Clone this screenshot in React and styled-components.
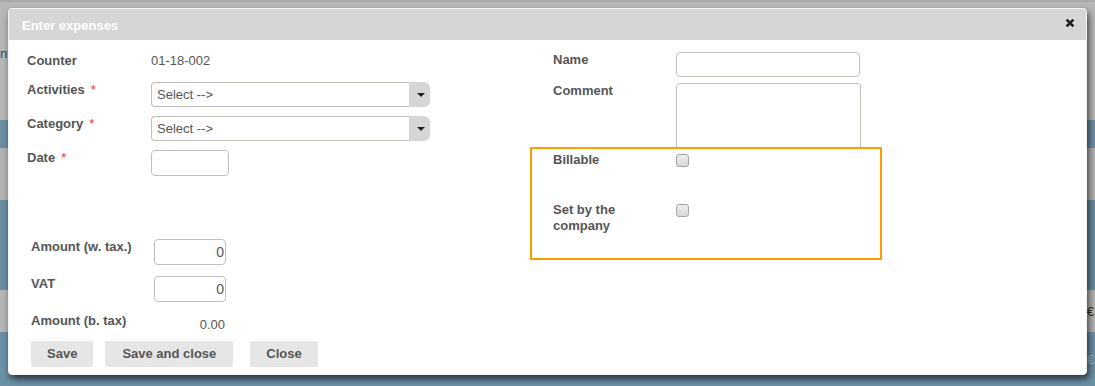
import React from "react";
import styled, { createGlobalStyle } from "styled-components";

const Global = createGlobalStyle`
  html, body { margin: 0; padding: 0; }
  body { font-family: "Liberation Sans", Arial, sans-serif; font-size: 13px; color: #555; }
  * { box-sizing: border-box; }
`;

const Page = styled.div`
  position: relative;
  width: 1095px;
  height: 386px;
  overflow: hidden;
`;

const Backdrop = styled.div`
  display: flex;
  flex-direction: column;
  height: 100%;
`;

const Band = styled.div`
  height: ${(p) => p.$h}px;
  background: ${(p) => p.$bg};
  display: flex;
  justify-content: space-between;
  align-items: ${(p) => p.$align || "center"};
  color: ${(p) => p.$fg || "#444"};
  font-size: 13px;
  flex-shrink: 0;
  border-top: ${(p) => (p.$line ? "2px solid #a9a9a9" : "none")};
`;

const BandText = styled.span`
  padding-top: ${(p) => p.$pt || 0}px;
  margin-left: ${(p) => p.$ml || 0}px;
  margin-right: ${(p) => p.$mr || 0}px;
`;

const Modal = styled.div`
  position: absolute;
  left: 8px;
  top: 8px;
  width: 1079px;
  height: 367px;
  background: #fff;
  border: 1px solid #f4f4f4;
  border-radius: 4px;
  box-shadow: 2px 4px 7px rgba(0, 0, 0, 0.65);
  overflow: hidden;
`;

const Header = styled.div`
  height: 31px;
  background: #d6d6d6;
  display: flex;
  align-items: center;
  justify-content: space-between;
  padding: 1px 11px 0 13px;
`;

const Title = styled.div`
  color: #fff;
  font-weight: bold;
  font-size: 13px;
`;

const CloseX = styled.svg`
  width: 10px;
  height: 10px;
  margin-top: -4px;
`;

const Body = styled.div`
  display: grid;
  grid-template-columns: 503px 352px;
  padding: 8px 0 0 18px;
`;

const Column = styled.div`
  display: flex;
  flex-direction: column;
  gap: ${(p) => p.$gap || 0}px;
`;

const Row = styled.div`
  display: grid;
  grid-template-columns: ${(p) => p.$label || 124}px auto;
  align-items: start;
  margin-top: ${(p) => p.$mt || 0}px;
`;

const Label = styled.div`
  font-weight: bold;
  color: #555;
  line-height: ${(p) => p.$lh || 15}px;
  max-width: ${(p) => p.$max || 200}px;
`;

const Req = styled.span`
  color: #e33;
  margin-left: 6px;
  font-weight: normal;
`;

const Value = styled.div`
  line-height: ${(p) => p.$lh || 15}px;
  padding-top: ${(p) => p.$pt || 0}px;
  text-align: ${(p) => p.$align || "left"};
  width: ${(p) => (p.$w ? p.$w + "px" : "auto")};
  padding-right: ${(p) => p.$pr || 0}px;
  color: #555;
`;

const SelectBox = styled.div`
  display: flex;
  width: 279px;
  height: 25px;
`;

const SelectText = styled.div`
  flex: 1;
  border: 1px solid #c2bdb6;
  border-right: none;
  border-radius: 4px 0 0 4px;
  padding-left: 5px;
  line-height: 23px;
  color: #555;
`;

const SelectArrow = styled.div`
  width: 21px;
  background: #d6d6d6;
  border-radius: 0 6px 6px 0;
  display: flex;
  align-items: center;
  justify-content: center;
  padding-left: 3px;
`;

const Tri = styled.div`
  width: 0;
  height: 0;
  border-left: 4px solid transparent;
  border-right: 4px solid transparent;
  border-top: 4px solid #222;
`;

const TextInput = styled.div`
  width: ${(p) => p.$w}px;
  height: ${(p) => p.$h || 26}px;
  border: 1px solid #c2bdb6;
  border-radius: 4px;
  text-align: right;
  line-height: ${(p) => (p.$h || 26) - 2}px;
  padding-right: 1px;
  font-size: 14px;
  color: #555;
`;

const Clip = styled.div`
  height: ${(p) => p.$h}px;
  overflow: hidden;
`;

const AmountBlock = styled.div`
  display: flex;
  flex-direction: column;
  padding-left: 4px;
  margin-top: 63px;
`;

const Buttons = styled.div`
  display: flex;
  margin-top: 9px;
`;

const Btn = styled.div`
  height: 26px;
  padding: 0 ${(p) => p.$px || 16}px;
  background: #e6e6e6;
  border-radius: 2px;
  font-weight: bold;
  color: #555;
  line-height: 26px;
  margin-left: ${(p) => p.$ml || 0}px;
`;

const RightCol = styled.div`
  display: flex;
  flex-direction: column;
`;

const RightInner = styled.div`
  display: flex;
  flex-direction: column;
  padding-left: 23px;
  padding-top: 4px;
  gap: 6px;
`;

const Highlight = styled.div`
  height: 113px;
  border: 2px solid #ff9d00;
  padding: 3px 0 0 21px;
  display: flex;
  flex-direction: column;
`;

const Check = styled.div`
  width: 13px;
  height: 13px;
  margin-top: 2px;
  border: 1px solid #a3a3a3;
  border-radius: 3px;
  background: linear-gradient(#eeeeee, #d9d9d9);
`;

export default function App() {
  return (
    <Page>
      <Global />
      <Backdrop>
        <Band $h={120} $bg="#b8b8b8" $align="flex-start" $fg="#2e4878" $line>
          <BandText $pt={44}>nt</BandText>
        </Band>
        <Band $h={28} $bg="#6c8fa4" />
        <Band $h={52} $bg="#b3b3b3" />
        <Band $h={90} $bg="#6a8da2" />
        <Band $h={42} $bg="#b6b6b6" $fg="#333">
          <span />
          <BandText $mr={1}>€</BandText>
        </Band>
        <Band $h={54} $bg="#6b90a6" $fg="#9fb8c6">
          <span />
          <BandText $mr={1}>€</BandText>
        </Band>
      </Backdrop>
      <Modal>
        <Header>
          <Title>Enter expenses</Title>
          <CloseX viewBox="0 0 10 10">
            <path d="M1.6 1.6 L8.4 8.4 M8.4 1.6 L1.6 8.4" stroke="#1e1e1e" strokeWidth="2.6" strokeLinecap="butt" />
          </CloseX>
        </Header>
        <Body>
          <Column>
            <Column $gap={9}>
              <Row>
                <Label $lh={25}>Counter</Label>
                <Value $lh={25}>01-18-002</Value>
              </Row>
              <Row>
                <Label>Activities<Req>*</Req></Label>
                <SelectBox>
                  <SelectText>Select --&gt;</SelectText>
                  <SelectArrow><Tri /></SelectArrow>
                </SelectBox>
              </Row>
              <Row>
                <Label>Category<Req>*</Req></Label>
                <SelectBox>
                  <SelectText>Select --&gt;</SelectText>
                  <SelectArrow><Tri /></SelectArrow>
                </SelectBox>
              </Row>
              <Row>
                <Label>Date<Req>*</Req></Label>
                <TextInput $w={78} />
              </Row>
            </Column>
            <AmountBlock>
              <Row $label={123}>
                <Label>Amount (w. tax.)</Label>
                <TextInput $w={72}>0</TextInput>
              </Row>
              <Row $label={123} $mt={11}>
                <Label>VAT</Label>
                <TextInput $w={72}>0</TextInput>
              </Row>
              <Row $label={123} $mt={11}>
                <Label>Amount (b. tax)</Label>
                <Value $pt={4} $w={72} $align="right" $pr={1}>0.00</Value>
              </Row>
              <Buttons>
                <Btn>Save</Btn>
                <Btn $ml={12} $px={17}>Save and close</Btn>
                <Btn $ml={17}>Close</Btn>
              </Buttons>
            </AmountBlock>
          </Column>
          <RightCol>
            <RightInner>
              <Row $label={123}>
                <Label>Name</Label>
                <TextInput $w={184} $h={25} />
              </Row>
              <Clip $h={64}>
                <Row $label={123}>
                  <Label>Comment</Label>
                  <TextInput $w={185} $h={70} />
                </Row>
              </Clip>
            </RightInner>
            <Highlight>
              <Row $label={123}>
                <Label>Billable</Label>
                <Check />
              </Row>
              <Row $label={123} $mt={35}>
                <Label $lh={16} $max={100}>Set by the company</Label>
                <Check />
              </Row>
            </Highlight>
          </RightCol>
        </Body>
      </Modal>
    </Page>
  );
}
